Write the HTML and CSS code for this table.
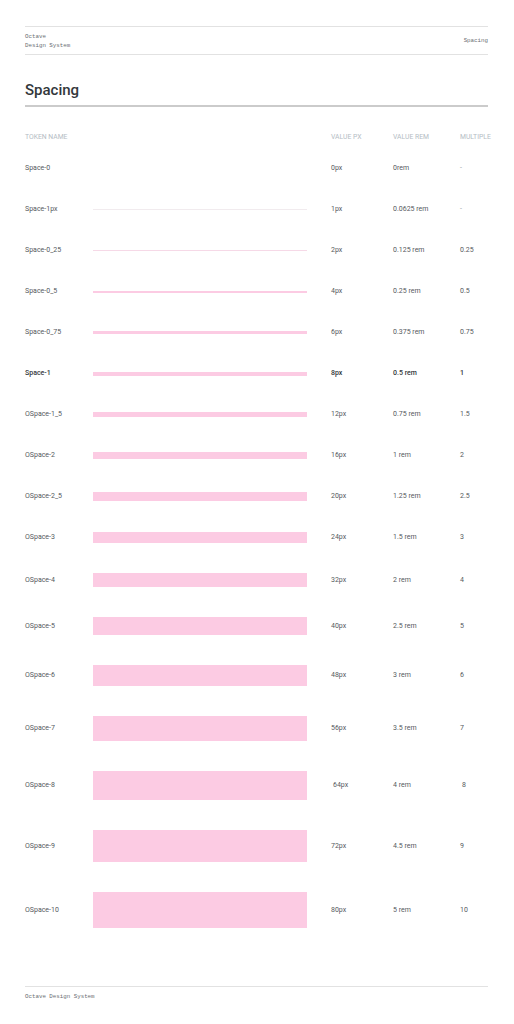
FILE: index.html
```html
<!DOCTYPE html>
<html lang="en">
<head>
    <meta charset="UTF-8">
    <meta name="viewport" content="width=device-width, initial-scale=1.0">
    <title>Spacing - Octave Design System</title>
    <link rel="stylesheet" href="styles.css">
</head>
<body>

    <div class="page">
        <!-- Top bar -->
        <header class="topbar">
            <div class="brand">Octave<br>Design System</div>
            <div class="crumb">Spacing</div>
        </header>

        <h1 class="title">Spacing</h1>

        <div class="table">
            <div class="row head">
                <div>TOKEN NAME</div>
                <div></div>
                <div class="px">VALUE PX</div>
                <div>VALUE REM</div>
                <div>MULTIPLE</div>
            </div>

            <div class="row">
                <div>Space-0</div>
                <div></div>
                <div class="px">0px</div>
                <div>0rem</div>
                <div class="dash">-</div>
            </div>
            <div class="row">
                <div>Space-1px</div>
                <div><div class="bar hair"></div></div>
                <div class="px">1px</div>
                <div>0.0625 rem</div>
                <div class="dash">-</div>
            </div>
            <div class="row">
                <div>Space-0_25</div>
                <div><div class="bar thin" style="height: 1px"></div></div>
                <div class="px">2px</div>
                <div>0.125 rem</div>
                <div>0.25</div>
            </div>
            <div class="row">
                <div>Space-0_5</div>
                <div><div class="bar" style="height: 2px"></div></div>
                <div class="px">4px</div>
                <div>0.25 rem</div>
                <div>0.5</div>
            </div>
            <div class="row">
                <div>Space-0_75</div>
                <div><div class="bar" style="height: 3px"></div></div>
                <div class="px">6px</div>
                <div>0.375 rem</div>
                <div>0.75</div>
            </div>
            <div class="row strong">
                <div>Space-1</div>
                <div><div class="bar" style="height: 4px"></div></div>
                <div class="px">8px</div>
                <div>0.5 rem</div>
                <div>1</div>
            </div>
            <div class="row">
                <div>OSpace-1_5</div>
                <div><div class="bar" style="height: 5px"></div></div>
                <div class="px">12px</div>
                <div>0.75 rem</div>
                <div>1.5</div>
            </div>
            <div class="row">
                <div>OSpace-2</div>
                <div><div class="bar" style="height: 7px"></div></div>
                <div class="px">16px</div>
                <div>1 rem</div>
                <div>2</div>
            </div>
            <div class="row">
                <div>OSpace-2_5</div>
                <div><div class="bar" style="height: 9px"></div></div>
                <div class="px">20px</div>
                <div>1.25 rem</div>
                <div>2.5</div>
            </div>
            <div class="row">
                <div>OSpace-3</div>
                <div><div class="bar" style="height: 11px"></div></div>
                <div class="px">24px</div>
                <div>1.5 rem</div>
                <div>3</div>
            </div>
            <div class="row">
                <div>OSpace-4</div>
                <div><div class="bar" style="height: 14px"></div></div>
                <div class="px">32px</div>
                <div>2 rem</div>
                <div>4</div>
            </div>
            <div class="row">
                <div>OSpace-5</div>
                <div><div class="bar" style="height: 18px"></div></div>
                <div class="px">40px</div>
                <div>2.5 rem</div>
                <div>5</div>
            </div>
            <div class="row">
                <div>OSpace-6</div>
                <div><div class="bar" style="height: 21px"></div></div>
                <div class="px">48px</div>
                <div>3 rem</div>
                <div>6</div>
            </div>
            <div class="row">
                <div>OSpace-7</div>
                <div><div class="bar" style="height: 25px"></div></div>
                <div class="px">56px</div>
                <div>3.5 rem</div>
                <div>7</div>
            </div>
            <div class="row">
                <div>OSpace-8</div>
                <div><div class="bar" style="height: 29px"></div></div>
                <div class="px nudge">64px</div>
                <div>4 rem</div>
                <div class="nudge">8</div>
            </div>
            <div class="row">
                <div>OSpace-9</div>
                <div><div class="bar" style="height: 32px"></div></div>
                <div class="px">72px</div>
                <div>4.5 rem</div>
                <div>9</div>
            </div>
            <div class="row">
                <div>OSpace-10</div>
                <div><div class="bar" style="height: 36px"></div></div>
                <div class="px">80px</div>
                <div>5 rem</div>
                <div>10</div>
            </div>
        </div>

        <!-- Footer -->
        <footer class="footer">Octave Design System</footer>
    </div>

</body>
</html>
```

FILE: styles.css
```css
:root {
    --text-color: #55595e;
    --dark-text: #33373b;
    --muted: #b4bcc4;
    --rule: #e2e2e2;
    --pink: #fccbe3;
}

body {
    margin: 0;
    padding: 0;
    background-color: #ffffff;
    font-family: Roboto, 'Noto Sans', sans-serif;
    color: var(--text-color);
}

.page {
    width: 463px;
    margin-left: 25px;
    padding-top: 26px;
}

.topbar {
    display: flex;
    justify-content: space-between;
    align-items: center;
    border-top: 1px solid var(--rule);
    border-bottom: 1px solid var(--rule);
    box-sizing: border-box;
    height: 29px;
    font-family: 'Liberation Mono', 'DejaVu Sans Mono', monospace;
    font-size: 5.8px;
    line-height: 9px;
    color: #6a6e73;
}

.title {
    margin: 0;
    padding-top: 25px;
    padding-bottom: 5px;
    font-size: 15px;
    line-height: 20px;
    font-weight: 500;
    color: var(--dark-text);
    border-bottom: 2px solid #cbcbcb;
}

.table {
    margin-top: 26px;
}

.row {
    display: grid;
    grid-template-columns: 68px 214px 86px 67px 1fr;
    align-items: center;
    min-height: 41px;
    box-sizing: border-box;
    padding: 15px 0;
    font-size: 7px;
    line-height: 9px;
}

.row > .px {
    padding-left: 24px;
}

.row.head {
    min-height: 0;
    padding: 0 0 6px 0;
    font-size: 6.8px;
    color: var(--muted);
}

.row.head > div:last-child {
    margin-right: -6px;
}

.row.strong {
    font-weight: 500;
    color: var(--dark-text);
}

.dash {
    color: #9aa0a6;
}

.nudge {
    margin-left: 2px;
}

.row .px.nudge {
    margin-left: 0;
    padding-left: 26px;
}

.bar {
    width: 214px;
    background-color: var(--pink);
}

.bar.hair {
    height: 1px;
    background-color: #f1ebee;
}

.bar.thin {
    background-color: #f6d9e7;
}

.footer {
    margin-top: 43px;
    border-top: 1px solid var(--rule);
    padding-top: 5px;
    font-family: 'Liberation Mono', 'DejaVu Sans Mono', monospace;
    font-size: 5.8px;
    line-height: 9px;
    color: #6a6e73;
}
```
